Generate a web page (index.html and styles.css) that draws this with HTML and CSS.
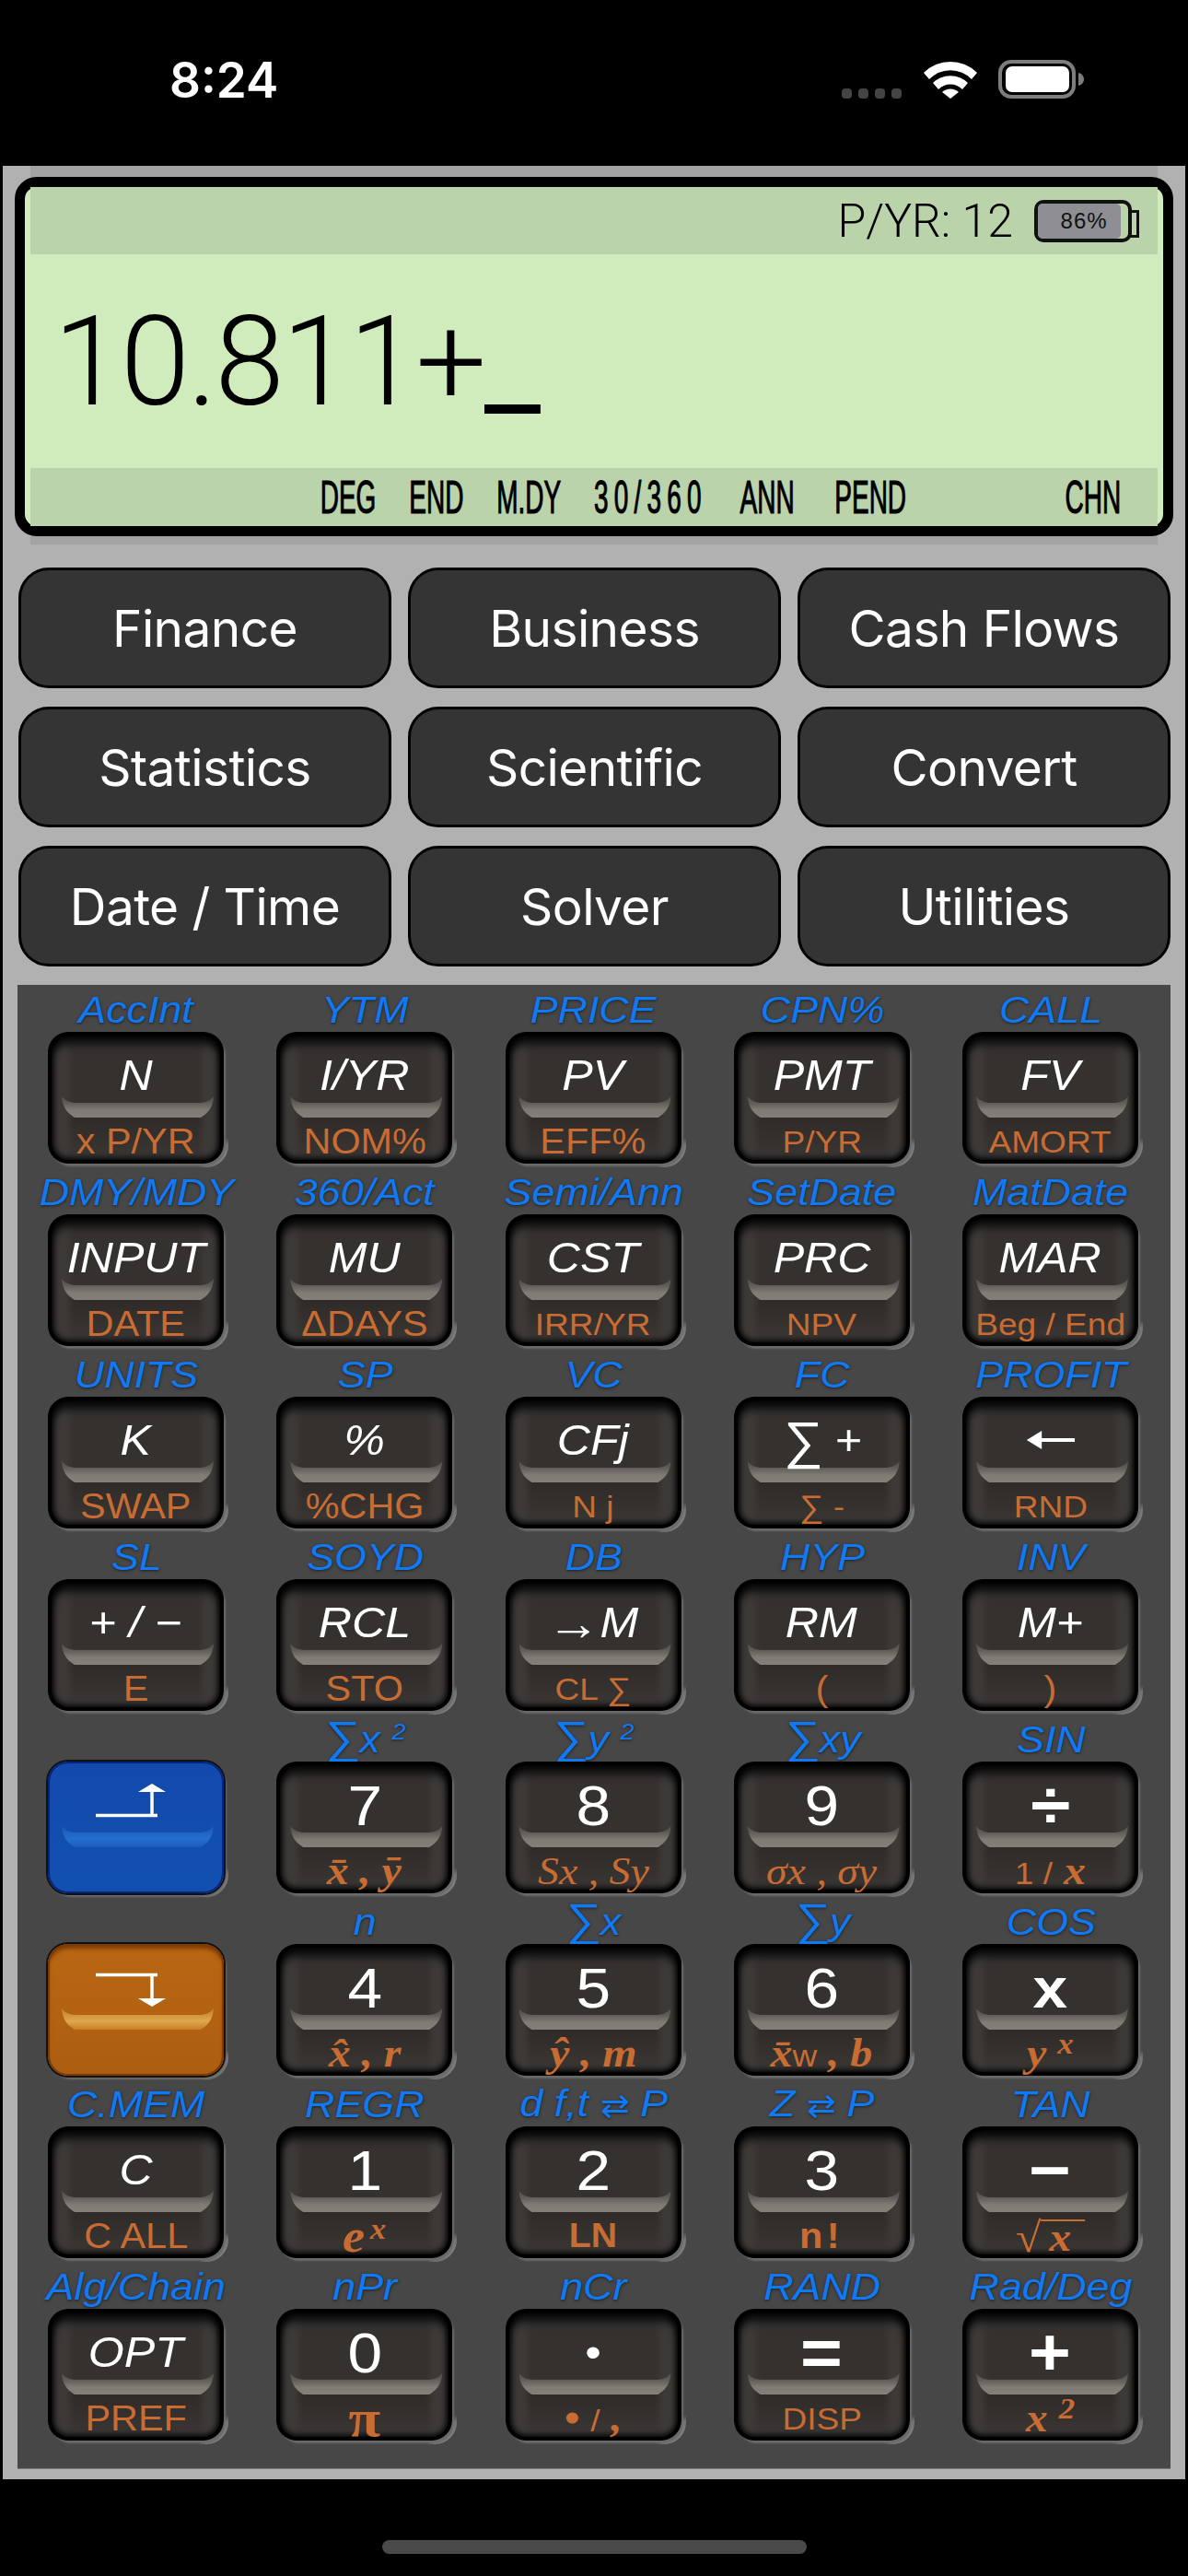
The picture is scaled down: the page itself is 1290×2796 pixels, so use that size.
FILE: index.html
```html
<!DOCTYPE html>
<html lang="en">
  <head>
    <meta charset="UTF-8" />
    <meta name="viewport" content="width=device-width, initial-scale=1.0" />
    <title>Financial Calculator</title>
    <link rel="stylesheet" href="styles.css">
  </head>
  <body>
    <header class="status">
      <span class="time">8:24</span>
      <div class="status-icons">
        <div class="dots"><i></i><i></i><i></i><i></i></div>
        <svg class="wifi" width="58" height="41" viewBox="0 0 58 41">
          <path d="M0 13 A41 41 0 0 1 58 13 L52 20 A32 32 0 0 0 6 20 Z" fill="#fff"/>
          <path d="M10 24 A27 27 0 0 1 48 24 L42 31 A18 18 0 0 0 16 31 Z" fill="#fff"/>
          <path d="M20 34 A13 13 0 0 1 38 34 L29 41 Z" fill="#fff"/>
        </svg>
        <svg class="batt" width="94" height="42" viewBox="0 0 94 42">
          <rect x="2" y="2" width="80" height="38" rx="12" fill="none" stroke="#7d7d7d" stroke-width="4"/>
          <rect x="8" y="7" width="69" height="28" rx="7" fill="#fff"/>
          <path d="M87 14 C91 15 93 18 93 21 C93 24 91 27 87 28 Z" fill="#7d7d7d"/>
        </svg>
      </div>
    </header>

    <main class="body">
      <section class="display-wrap">
        <div class="display">
          <div class="band band-top">
            <span class="pyr">P/YR: 12</span>
            <div class="lcd-batt"><div class="lcd-fill">86%</div></div>
          </div>
          <div class="readout">10.811+<span class="cursor">_</span></div>
          <div class="band band-bottom">
            <div class="modes">
              <span>DEG</span><span>END</span><span>M.DY</span><span class="wide">30/360</span><span>ANN</span><span class="pend">PEND</span><span class="chn">CHN</span>
            </div>
          </div>
        </div>
      </section>

      <nav class="menu">
        <button>Finance</button>
        <button>Business</button>
        <button>Cash Flows</button>
        <button>Statistics</button>
        <button>Scientific</button>
        <button>Convert</button>
        <button>Date / Time</button>
        <button>Solver</button>
        <button>Utilities</button>
      </nav>

      <section class="keys">
        <div class="cell"><div class="top"><b>AccInt</b></div><div class="key"><span class="main it">N</span><span class="sub">x P/YR</span></div></div>
        <div class="cell"><div class="top"><b>YTM</b></div><div class="key"><span class="main it">I/YR</span><span class="sub">NOM%</span></div></div>
        <div class="cell"><div class="top"><b>PRICE</b></div><div class="key"><span class="main it">PV</span><span class="sub">EFF%</span></div></div>
        <div class="cell"><div class="top"><b>CPN%</b></div><div class="key"><span class="main it">PMT</span><span class="sub small">P/YR</span></div></div>
        <div class="cell"><div class="top"><b>CALL</b></div><div class="key"><span class="main it">FV</span><span class="sub small">AMORT</span></div></div>

        <div class="cell"><div class="top"><b>DMY/MDY</b></div><div class="key"><span class="main it">INPUT</span><span class="sub">DATE</span></div></div>
        <div class="cell"><div class="top"><b>360/Act</b></div><div class="key"><span class="main it">MU</span><span class="sub">ΔDAYS</span></div></div>
        <div class="cell"><div class="top"><b>Semi/Ann</b></div><div class="key"><span class="main it">CST</span><span class="sub small">IRR/YR</span></div></div>
        <div class="cell"><div class="top"><b>SetDate</b></div><div class="key"><span class="main it">PRC</span><span class="sub small">NPV</span></div></div>
        <div class="cell"><div class="top"><b>MatDate</b></div><div class="key"><span class="main it">MAR</span><span class="sub small">Beg / End</span></div></div>

        <div class="cell"><div class="top"><b>UNITS</b></div><div class="key"><span class="main it">K</span><span class="sub">SWAP</span></div></div>
        <div class="cell"><div class="top"><b>SP</b></div><div class="key"><span class="main it">%</span><span class="sub">%CHG</span></div></div>
        <div class="cell"><div class="top"><b>VC</b></div><div class="key"><span class="main it">CFj</span><span class="sub small">N j</span></div></div>
        <div class="cell"><div class="top"><b>FC</b></div><div class="key"><span class="main it"><i class="sig">∑</i> +</span><span class="sub small">∑ -</span></div></div>
        <div class="cell"><div class="top"><b>PROFIT</b></div><div class="key"><span class="main">
          <svg width="48" height="24" viewBox="0 0 48 24"><path d="M14 12H48" stroke="#fff" stroke-width="4"/><path d="M0 12L15 2V22Z" fill="#fff"/></svg>
        </span><span class="sub small">RND</span></div></div>

        <div class="cell"><div class="top"><b>SL</b></div><div class="key"><span class="main it">+ / −</span><span class="sub">E</span></div></div>
        <div class="cell"><div class="top"><b>SOYD</b></div><div class="key"><span class="main it">RCL</span><span class="sub">STO</span></div></div>
        <div class="cell"><div class="top"><b>DB</b></div><div class="key"><span class="main it"><i class="arr">→</i>M</span><span class="sub small">CL ∑</span></div></div>
        <div class="cell"><div class="top"><b>HYP</b></div><div class="key"><span class="main it">RM</span><span class="sub">(</span></div></div>
        <div class="cell"><div class="top"><b>INV</b></div><div class="key"><span class="main it">M+</span><span class="sub">)</span></div></div>

        <div class="cell"><div class="top"></div><div class="key blue">
          <svg class="shift shift-up" width="67" height="36" viewBox="0 0 67 36"><path d="M0 34.5H67M61 33V8" stroke="#fff" stroke-width="3.5" fill="none"/><path d="M61 0L76 9H46Z" fill="#fff"/></svg>
        </div></div>
        <div class="cell"><div class="top"><b><i class="sig">∑</i>x <sup>2</sup></b></div><div class="key"><span class="main num">7</span><span class="sub math">x̄ , ȳ</span></div></div>
        <div class="cell"><div class="top"><b><i class="sig">∑</i>y <sup>2</sup></b></div><div class="key"><span class="main num">8</span><span class="sub math thin">Sx , Sy</span></div></div>
        <div class="cell"><div class="top"><b><i class="sig">∑</i>xy</b></div><div class="key"><span class="main num">9</span><span class="sub math thin">σx , σy</span></div></div>
        <div class="cell"><div class="top"><b>SIN</b></div><div class="key"><span class="main num op">÷</span><span class="sub math"><small>1 /</small> x</span></div></div>

        <div class="cell"><div class="top"></div><div class="key orange">
          <svg class="shift shift-down" width="67" height="36" viewBox="0 0 67 36"><path d="M0 1.5H67M61 3V28" stroke="#fff" stroke-width="3.5" fill="none"/><path d="M61 36L76 27H46Z" fill="#fff"/></svg>
        </div></div>
        <div class="cell"><div class="top"><b>n</b></div><div class="key"><span class="main num">4</span><span class="sub math">x̂ , r</span></div></div>
        <div class="cell"><div class="top"><b><i class="sig">∑</i>x</b></div><div class="key"><span class="main num">5</span><span class="sub math">ŷ , m</span></div></div>
        <div class="cell"><div class="top"><b><i class="sig">∑</i>y</b></div><div class="key"><span class="main num">6</span><span class="sub math">x̄<small>w</small> , b</span></div></div>
        <div class="cell"><div class="top"><b>COS</b></div><div class="key"><span class="main num op times">x</span><span class="sub math">y <sup>x</sup></span></div></div>

        <div class="cell"><div class="top"><b>C.MEM</b></div><div class="key"><span class="main it">C</span><span class="sub">C ALL</span></div></div>
        <div class="cell"><div class="top"><b>REGR</b></div><div class="key"><span class="main num">1</span><span class="sub math big">e<sup class="tight">x</sup></span></div></div>
        <div class="cell"><div class="top"><b>d f,t <i class="swap">⇄</i> P</b></div><div class="key"><span class="main num">2</span><span class="sub bold">LN</span></div></div>
        <div class="cell"><div class="top"><b>Z <i class="swap">⇄</i> P</b></div><div class="key"><span class="main num">3</span><span class="sub bold bang">n!</span></div></div>
        <div class="cell"><div class="top"><b>TAN</b></div><div class="key"><span class="main num op">−</span><span class="sub math roots"><span class="radical">√</span><span class="root">x</span></span></div></div>

        <div class="cell"><div class="top"><b>Alg/Chain</b></div><div class="key"><span class="main it">OPT</span><span class="sub">PREF</span></div></div>
        <div class="cell"><div class="top"><b>nPr</b></div><div class="key"><span class="main num">0</span><span class="sub math pi">π</span></div></div>
        <div class="cell"><div class="top"><b>nCr</b></div><div class="key"><span class="main num dot">•</span><span class="sub math">• <small>/</small> ,</span></div></div>
        <div class="cell"><div class="top"><b>RAND</b></div><div class="key"><span class="main num op">=</span><span class="sub small">DISP</span></div></div>
        <div class="cell"><div class="top"><b>Rad/Deg</b></div><div class="key"><span class="main num op">+</span><span class="sub math">x <sup>2</sup></span></div></div>
      </section>
    </main>

    <footer class="home"><div class="home-bar"></div></footer>
  </body>
</html>
```

FILE: styles.css
```css
* {
  box-sizing: border-box;
}
body {
  margin: 0;
  width: 1290px;
  height: 2796px;
  background-color: #000;
  font-family: "Liberation Sans", Arial, sans-serif;
  overflow: hidden;
}

/* status bar */
.status {
  height: 180px;
  display: flex;
  align-items: flex-start;
  justify-content: space-between;
  padding: 60px 112px 0 184px;
}
.time {
  color: #fff;
  font-family: Inter, sans-serif;
  font-size: 53px;
  font-weight: 600;
  line-height: 54px;
}
.status-icons {
  display: flex;
  align-items: flex-end;
  gap: 23px;
  padding-top: 5px;
}
.dots {
  display: flex;
  gap: 7px;
  margin-right: 1px;
}
.dots i {
  width: 11px;
  height: 11px;
  border-radius: 4px;
  background-color: #444;
}
.wifi,
.batt {
  display: block;
}

/* grey calculator body */
.body {
  margin: 0 3px;
  height: 2511px;
  background-color: #b1b1b1;
  padding-bottom: 13px;
}
.display-wrap {
  margin: 0 30px;
  padding: 12px 0 9px;
  background-color: #a3a3a3;
}
.display {
  margin: 0 -17px 0 -17px;
  height: 390px;
  border: 11px solid #000;
  border-radius: 24px;
  background-color: #d0ecbc;
  padding: 0 6px;
  display: flex;
  flex-direction: column;
}
.band {
  background-color: #bbd3aa;
  display: flex;
  align-items: center;
}
.band-top {
  height: 73px;
  justify-content: flex-end;
  padding-right: 28px;
}
.pyr {
  font-family: Roboto, sans-serif;
  font-weight: 300;
  font-size: 50px;
  color: #000;
  margin-right: 23px;
}
.lcd-batt {
  position: relative;
  width: 106px;
  height: 46px;
  border: 4px solid #111;
  border-radius: 10px;
  background-color: #bbd3aa;
}
.lcd-batt::after {
  content: "";
  position: absolute;
  right: -12px;
  top: 7px;
  width: 8px;
  height: 24px;
  border: 3px solid #111;
  border-left: 0;
}
.lcd-fill {
  width: 92%;
  height: 100%;
  border-radius: 5px;
  background-color: #8e8e93;
  color: #111;
  font-size: 24px;
  letter-spacing: 1px;
  line-height: 38px;
  text-align: center;
  padding-left: 10px;
}
.readout {
  flex: 1;
  display: flex;
  align-items: center;
  padding: 0 0 0 25px;
  font-family: Roboto, sans-serif;
  font-weight: 300;
  font-size: 136px;
  color: #000;
  letter-spacing: -2.7px;
}
.cursor {
  font-weight: 400;
}
.band-bottom {
  height: 63px;
  overflow: hidden;
}
.modes {
  width: 222%;
  flex: none;
  display: flex;
  gap: 64px;
  padding-left: 562px;
  transform: scaleX(0.56);
  transform-origin: left center;
  font-size: 50px;
  -webkit-text-stroke: 1.2px #000;
  color: #000;
}
.modes .wide {
  letter-spacing: 11px;
}
.modes .pend {
  margin-left: 14px;
}
.modes .chn {
  margin-left: 244px;
}

/* menu buttons */
.menu {
  display: grid;
  grid-template-columns: repeat(3, 405px);
  grid-auto-rows: 131px;
  column-gap: 18px;
  row-gap: 20px;
  padding: 25px 0 0 17px;
}
.menu button {
  background-color: #343434;
  color: #fff;
  border: 3px solid #000;
  border-radius: 33px;
  font-family: Inter, sans-serif;
  font-size: 55px;
  letter-spacing: -0.6px;
  padding: 0;
}

/* keypad */
.keys {
  margin: 20px 16px 0;
  height: 1610px;
  background-color: #474747;
  box-shadow: 0 1px 0 #777;
  padding: 0 30px 0 33px;
  display: grid;
  grid-template-columns: repeat(5, 196px);
  grid-auto-rows: 198px;
  column-gap: 52.25px;
}
.cell {
  display: flex;
  flex-direction: column;
  align-items: center;
}
.top {
  height: 51px;
  width: 100%;
  display: flex;
  justify-content: center;
  align-items: center;
  padding: 3px 4px 0 0;
  white-space: pre;
}
.top b {
  display: block;
  color: #107af6;
  font-weight: normal;
  font-style: italic;
  font-size: 40px;
  line-height: 46px;
  transform: scaleX(1.12);
  text-shadow: 0 1px 3px rgba(0, 0, 0, 0.6);
}
.top sup {
  font-size: 24px;
  line-height: 0;
  vertical-align: 14px;
}
.sig {
  font-size: 1.2em;
  line-height: 0;
}
.swap {
  font-size: 0.85em;
  font-style: normal;
}

.key {
  position: relative;
  width: 196px;
  height: 147px;
  padding: 11px 5px 4px 0;
  border-radius: 24px;
  background: radial-gradient(circle at 100% 100%, #8f8f8f 0, #777 24px, transparent 32px);
  display: flex;
  flex-direction: column;
  align-items: center;
}
.key::before {
  content: "";
  position: absolute;
  left: 0;
  top: 0;
  right: 5px;
  bottom: 4px;
  border-radius: 22px;
  background:
    linear-gradient(90deg, #3c3937 0, #3c3937 10%, transparent 15%, transparent 85%, #3c3937 90%, #3c3937 100%),
    linear-gradient(#35312f 0, #35312f 60%, #2e2b29 66%, #353230 85%, #3b3836 100%);
  box-shadow:
    inset 0 0 0 4px #000,
    inset 0 0 6px 6px #000,
    inset 0 12px 8px 2px #111,
    3px 4px 2px -1px #6b6b6b;
}
.key::after {
  content: "";
  position: absolute;
  left: 15px;
  width: 165px;
  top: 70px;
  height: 23px;
  background: linear-gradient(#514e4b 0, #5f5c58 30%, #7f7b75 65%, #83807a 100%);
  clip-path: path("M0 0 C1 12 6 18 14 23 L151 23 C159 18 164 12 165 0 C160 6 155 7 148 7 L17 7 C10 7 5 6 0 0 Z");
}
.key.blue::before {
  background: linear-gradient(#1249ad, #124ead 55%, #1250b0);
  box-shadow:
    inset 0 0 0 2px #05257d,
    0 0 0 2px #111,
    3px 4px 2px 0 #6b6b6b;
}
.key.blue::after {
  background: linear-gradient(#1a55b8, #2570cf 60%, #1d5cbb);
}
.key.orange::before {
  background: linear-gradient(#b86612, #b36213 55%, #ad5d10);
  box-shadow:
    inset 0 0 0 2px #7b3a06,
    inset 0 5px 4px #7b3a06,
    0 0 0 2px #111,
    3px 4px 2px 0 #6b6b6b;
}
.key.orange::after {
  background: linear-gradient(#c47f28, #dfa84f 60%, #c67e24);
}
.main,
.sub,
.shift {
  position: relative;
  z-index: 1;
}
.main {
  height: 72px;
  display: flex;
  align-items: center;
  color: #fff;
  font-size: 46px;
  transform: scaleX(1.09);
  white-space: pre;
}
.main.it {
  font-style: italic;
}
.main.num {
  font-size: 62px;
}
.main.op {
  font-weight: bold;
  font-size: 72px;
}
.main.times {
  font-size: 62px;
}
.main.dot {
  font-size: 46px;
}
.arr {
  font-size: 1.15em;
  font-style: normal;
}
.sub {
  margin-top: 14px;
  height: 44px;
  display: flex;
  align-items: center;
  color: #c86c33;
  font-size: 38px;
  white-space: pre;
  transform: scaleX(1.09);
}
.sub.small {
  font-size: 34px;
}
.sub.bold {
  font-weight: bold;
  font-size: 36px;
}
.sub.bang {
  font-size: 38px;
  letter-spacing: 4px;
}
.sub.math {
  font-family: "Liberation Serif", "Times New Roman", serif;
  font-style: italic;
  font-weight: bold;
  font-size: 44px;
  display: block;
  line-height: 44px;
}
.sub.thin {
  font-weight: normal;
  font-size: 42px;
}
.sub.big {
  font-size: 50px;
}
.sub.pi {
  font-style: normal;
  font-size: 58px;
}
.sub sup {
  font-size: 32px;
  line-height: 0;
  vertical-align: 14px;
}
.sub sup.tight {
  margin-left: 5px;
}
.sub small {
  font-family: "Liberation Sans", Arial, sans-serif;
  font-style: normal;
  font-weight: normal;
  font-size: 34px;
}
.sub.roots {
  display: flex;
  align-items: flex-end;
  height: 46px;
  line-height: 40px;
}
.radical {
  font-weight: normal;
  font-style: normal;
  font-size: 46px;
  line-height: 44px;
}
.root {
  border-top: 2px solid #c86c33;
  padding: 0 14px 0 8px;
  line-height: 36px;
  margin-bottom: 4px;
}
.shift-up {
  margin: 13px 20px 0 0;
  overflow: visible;
}
.shift-down {
  margin: 21px 20px 0 0;
  overflow: visible;
}

/* home indicator */
.home {
  height: 105px;
  display: flex;
  justify-content: center;
  padding-top: 66px;
}
.home-bar {
  width: 461px;
  height: 15px;
  border-radius: 8px;
  background-color: #4a4a4a;
}
```
